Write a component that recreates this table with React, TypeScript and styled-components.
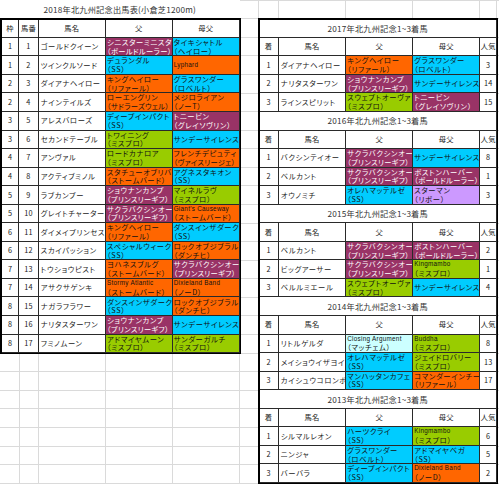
import styled, { createGlobalStyle } from 'styled-components';

const GRID = '#dadada';
const LINE = '#2a2a2a';

const COLORS = {
  M: { bg: '#993366', fg: '#ffffff' },
  C: { bg: '#00ccff', fg: '#111111' },
  O: { bg: '#ff6600', fg: '#111111' },
  G: { bg: '#99cc00', fg: '#111111' },
  LC: { bg: '#ccffff', fg: '#111111' },
  LP: { bg: '#cc99ff', fg: '#111111' },
};

type ColorKey = keyof typeof COLORS;
type Blood = { name: string; line?: string; c: ColorKey };

const b = (name: string, line: string | undefined, c: ColorKey): Blood => ({ name, line, c });

// spreadsheet column lines (px from left edge)
const V_LINES = [19.3, 38.7, 106, 172.7, 240, 258.3, 278.3, 345.7, 412.7, 480, 496.7];
const vGradient = `linear-gradient(to right, ${V_LINES.map(
  (x) => `transparent ${x - 0.5}px, ${GRID} ${x - 0.5}px, ${GRID} ${x + 0.5}px, transparent ${x + 0.5}px`
).join(', ')})`;
const hGradient = `repeating-linear-gradient(to bottom, ${GRID} 0 0.62px, transparent 0.62px 18.2px, ${GRID} 18.2px 18.58px)`;

const entries: [number, number, string, Blood, Blood][] = [
  [1, 1, 'ゴールドクイーン', b('シニスターミニスタ', '（ボールドルーラー）', 'M'), b('タイキシャトル', '（ヘイロー）', 'C')],
  [1, 2, 'ツインクルソード', b('デュランダル', '（SS）', 'C'), b('Lyphard', undefined, 'O')],
  [2, 3, 'ダイアナヘイロー', b('キングヘイロー', '（リファール）', 'O'), b('グラスワンダー', '（ロベルト）', 'C')],
  [2, 4, 'ナインテイルズ', b('ローエングリン', '（サドラーズウェル）', 'O'), b('メジロライアン', '（ノーT）', 'O')],
  [3, 5, 'アレスバローズ', b('ディープインパクト', '（SS）', 'C'), b('トニービン', '（グレイソヴリン）', 'M')],
  [3, 6, 'セカンドテーブル', b('トワイニング', '（ミスプロ）', 'G'), b('サンデーサイレンス', undefined, 'C')],
  [4, 7, 'アンヴァル', b('ロードカナロア', '（ミスプロ）', 'G'), b('フレンチデピュティ', '（ヴァイスリージェ）', 'O')],
  [4, 8, 'アクティブミノル', b('スタチューオブリバ', '（ストームバード）', 'O'), b('アグネスタキオン', '（SS）', 'C')],
  [5, 9, 'ラブカンプー', b('ショウナンカンプ', '（プリンスリーギフ）', 'M'), b('マイネルラヴ', '（ミスプロ）', 'G')],
  [5, 10, 'グレイトチャーター', b('サクラバクシンオー', '（プリンスリーギフ）', 'M'), b("Giant's Causeway", '（ストームバード）', 'O')],
  [6, 11, 'ダイメイプリンセス', b('キングヘイロー', '（リファール）', 'O'), b('ダンスインザダーク', '（SS）', 'C')],
  [6, 12, 'スカイパッション', b('スペシャルウィーク', '（SS）', 'C'), b('ロックオブジブラル', '（ダンチヒ）', 'O')],
  [7, 13, 'トウショウピスト', b('ヨハネスブルグ', '（ストームバード）', 'O'), b('サクラバクシンオー', '（プリンスリーギフ）', 'M')],
  [7, 14, 'アサクサゲンキ', b('Stormy Atlantic', '（ストームバード）', 'O'), b('Dixieland Band', '（ノーD）', 'O')],
  [8, 15, 'ナガラフラワー', b('ダンスインザダーク', '（SS）', 'C'), b('ロックオブジブラル', '（ダンチヒ）', 'O')],
  [8, 16, 'ナリタスターワン', b('ショウナンカンプ', '（プリンスリーギフ）', 'M'), b('サンデーサイレンス', undefined, 'C')],
  [8, 17, 'フミノムーン', b('アドマイヤムーン', '（ミスプロ）', 'G'), b('サンダーガルチ', '（ミスプロ）', 'G')],
];

type Placed = [number, string, Blood, Blood, number];

const results: { year: number; rows: Placed[] }[] = [
  {
    year: 2017,
    rows: [
      [1, 'ダイアナヘイロー', b('キングヘイロー', '（リファール）', 'O'), b('グラスワンダー', '（ロベルト）', 'C'), 3],
      [2, 'ナリタスターワン', b('ショウナンカンプ', '（プリンスリーギフ）', 'M'), b('サンデーサイレンス', undefined, 'C'), 14],
      [3, 'ラインスピリット', b('スウェプトオーヴァ', '（ミスプロ）', 'G'), b('トニービン', '（グレイソヴリン）', 'M'), 15],
    ],
  },
  {
    year: 2016,
    rows: [
      [1, 'バクシンテイオー', b('サクラバクシンオー', '（プリンスリーギフ）', 'M'), b('サンデーサイレンス', undefined, 'C'), 8],
      [2, 'ベルカント', b('サクラバクシンオー', '（プリンスリーギフ）', 'M'), b('ボストンハーバー', '（ボールドルーラー）', 'M'), 1],
      [3, 'オウノミチ', b('オレハマッテルゼ', '（SS）', 'C'), b('スターマン', '（リボー）', 'LP'), 3],
    ],
  },
  {
    year: 2015,
    rows: [
      [1, 'ベルカント', b('サクラバクシンオー', '（プリンスリーギフ）', 'M'), b('ボストンハーバー', '（ボールドルーラー）', 'M'), 2],
      [2, 'ビッグアーサー', b('サクラバクシンオー', '（プリンスリーギフ）', 'M'), b('Kingmambo', '（ミスプロ）', 'G'), 1],
      [3, 'ベルルミエール', b('スウェプトオーヴァ', '（ミスプロ）', 'G'), b('サンデーサイレンス', undefined, 'C'), 4],
    ],
  },
  {
    year: 2014,
    rows: [
      [1, 'リトルゲルダ', b('Closing Argument', '（マッチェム）', 'LC'), b('Buddha', '（ミスプロ）', 'G'), 8],
      [2, 'メイショウイザヨイ', b('オレハマッテルゼ', '（SS）', 'C'), b('ジェイドロバリー', '（ミスプロ）', 'G'), 13],
      [3, 'カイシュウコロンボ', b('マンハッタンカフェ', '（SS）', 'C'), b('コマンダーインチー', '（リファール）', 'O'), 17],
    ],
  },
  {
    year: 2013,
    rows: [
      [1, 'シルマルレオン', b('ハーツクライ', '（SS）', 'C'), b('Kingmambo', '（ミスプロ）', 'G'), 6],
      [2, 'ニンジャ', b('グラスワンダー', '（ロベルト）', 'C'), b('アドマイヤベガ', '（SS）', 'C'), 5],
      [3, 'バーバラ', b('ディープインパクト', '（SS）', 'C'), b('Dixieland Band', '（ノーD）', 'O'), 2],
    ],
  },
];

const GlobalStyle = createGlobalStyle`
  html, body {
    margin: 0;
    padding: 0;
    background: #fff;
  }
  body {
    font-family: "Noto Sans CJK JP", "Noto Sans", sans-serif;
    font-feature-settings: "palt";
    color: #222;
  }
`;

const Sheet = styled.div`
  width: 499px;
  height: 484px;
  overflow: hidden;
  display: flex;
  align-items: flex-start;
  background-color: #fff;
  background-image: ${hGradient}, ${vGradient};
`;

const LeftBlock = styled.div`
  flex: none;
  width: 241px;
`;

const RightBlock = styled.div`
  flex: none;
  margin: 17.7px 0 0 16.5px;
`;

const SheetTitle = styled.div`
  height: 17.7px;
  width: 239.5px;
  background: #fff;
  display: flex;
  align-items: center;
  justify-content: center;
  font-size: 8.2px;
  letter-spacing: 0.2px;
  color: #333;
`;

const Table = styled.div<{ $cols: string }>`
  display: grid;
  grid-template-columns: ${(p) => p.$cols};
  grid-template-rows: 18.1px;
  grid-auto-rows: 18.56px;
  box-sizing: border-box;
  border-top: 2px solid #000;
  border-left: 2px solid #000;
  border-right: 1px solid #000;
  border-bottom: 1px solid #000;
  background: #fff;
`;

const Cell = styled.div<{ $bg?: string; $fg?: string; $center?: boolean; $pad?: number }>`
  box-sizing: border-box;
  min-width: 0;
  border-right: 1px solid ${LINE};
  border-bottom: 1px solid ${LINE};
  background: ${(p) => p.$bg ?? '#fff'};
  color: ${(p) => p.$fg ?? '#222'};
  display: flex;
  flex-direction: column;
  justify-content: center;
  align-items: ${(p) => (p.$center ? 'center' : 'flex-start')};
  padding: 0 0 0 ${(p) => (p.$center ? 0 : p.$pad ?? 1)}px;
  font-size: 7.3px;
  line-height: 8.7px;
  letter-spacing: ${(p) => (p.$center ? 0.3 : 0.65)}px;
  white-space: nowrap;
  overflow: hidden;
`;

const SectionTitle = styled(Cell)`
  grid-column: 1 / -1;
  font-size: 8.2px;
  letter-spacing: 0.2px;
  color: #333;
`;

const Line = styled.span<{ $latin?: boolean; $long?: boolean }>`
  display: block;
  font-size: ${(p) => (p.$latin ? '6.3px' : 'inherit')};
  letter-spacing: ${(p) => (p.$latin ? '0.3px' : p.$long ? '0.3px' : 'inherit')};
  font-family: ${(p) => (p.$latin ? '"Liberation Sans", Arial, sans-serif' : 'inherit')};
`;

const isLatin = (s: string) => /^[A-Za-z]/.test(s);

const BloodCell = ({ v }: { v: Blood }) => (
  <Cell $bg={COLORS[v.c].bg} $fg={COLORS[v.c].fg}>
    <Line $latin={isLatin(v.name)}>{v.name}</Line>
    {v.line && <Line $long={v.line.length >= 10}>{v.line}</Line>}
  </Cell>
);

const LEFT_COLS = '17.3px 19.4px 67.3px 66.7px 67.3px';
const RIGHT_COLS = '19.3px 67.4px 67px 67.3px 16.5px';

export default function App() {
  return (
    <>
      <GlobalStyle />
      <Sheet>
        <LeftBlock>
          <SheetTitle>2018年北九州記念出馬表(小倉芝1200m)</SheetTitle>
          <Table $cols={LEFT_COLS}>
            <Cell $center>枠</Cell>
            <Cell $center>馬番</Cell>
            <Cell $center>馬名</Cell>
            <Cell $center>父</Cell>
            <Cell $center>母父</Cell>
            {entries.map(([waku, ban, name, sire, dam]) => (
              <Row key={ban}>
                <Cell $center>{waku}</Cell>
                <Cell $center>{ban}</Cell>
                <Cell $pad={2}>{name}</Cell>
                <BloodCell v={sire} />
                <BloodCell v={dam} />
              </Row>
            ))}
          </Table>
        </LeftBlock>

        <RightBlock>
          <Table $cols={RIGHT_COLS}>
            {results.map((r) => (
              <Row key={r.year}>
                <SectionTitle $center>{r.year}年北九州記念1~3着馬</SectionTitle>
                <Cell $center>着</Cell>
                <Cell $center>馬名</Cell>
                <Cell $center>父</Cell>
                <Cell $center>母父</Cell>
                <Cell $center>人気</Cell>
                {r.rows.map(([rank, name, sire, dam, pop]) => (
                  <Row key={rank}>
                    <Cell $center>{rank}</Cell>
                    <Cell $pad={2}>{name}</Cell>
                    <BloodCell v={sire} />
                    <BloodCell v={dam} />
                    <Cell $center>{pop}</Cell>
                  </Row>
                ))}
              </Row>
            ))}
          </Table>
        </RightBlock>
      </Sheet>
    </>
  );
}

// rows are only a grouping of grid cells, they take no box of their own
const Row = styled.div`
  display: contents;
`;
